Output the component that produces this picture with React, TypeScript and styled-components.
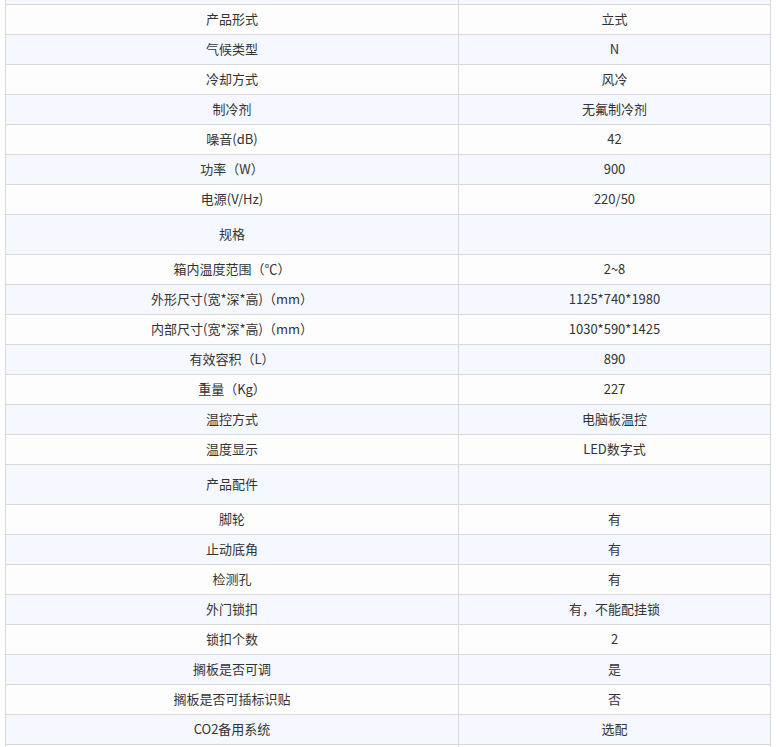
import React from "react";
import styled, { createGlobalStyle } from "styled-components";

const Global = createGlobalStyle`
  html, body { margin: 0; padding: 0; background: #ffffff; }
  body { font-family: "Noto Sans CJK SC", "Liberation Sans", sans-serif; overflow: hidden; }
`;

const Page = styled.div`
  padding-left: 5px;
  width: 766px;
`;

const Table = styled.table`
  width: 766px;
  margin-top: -26px;
  border-collapse: collapse;
  table-layout: fixed;
  font-size: 13px;
  color: #333333;
`;

const Row = styled.tr<{ $shaded: boolean; $tall?: boolean }>`
  background: ${(p) => (p.$shaded ? "#f5f9ff" : "#fdfdfd")};
  height: ${(p) => (p.$tall ? 40 : 30)}px;
`;

const Cell = styled.td<{ $w?: number }>`
  border: 1px solid #d9d9d9;
  padding: 0 0 2px 0;
  text-align: center;
  vertical-align: middle;
  line-height: 18px;
  ${(p) => (p.$w ? `width: ${p.$w}px;` : "")}
`;

const rows: [string, string, boolean?][] = [
  ["", ""],
  ["产品形式", "立式"],
  ["气候类型", "N"],
  ["冷却方式", "风冷"],
  ["制冷剂", "无氟制冷剂"],
  ["噪音(dB)", "42"],
  ["功率（W）", "900"],
  ["电源(V/Hz)", "220/50"],
  ["规格", "", true],
  ["箱内温度范围（℃）", "2~8"],
  ["外形尺寸(宽*深*高)（mm）", "1125*740*1980"],
  ["内部尺寸(宽*深*高)（mm）", "1030*590*1425"],
  ["有效容积（L）", "890"],
  ["重量（Kg）", "227"],
  ["温控方式", "电脑板温控"],
  ["温度显示", "LED数字式"],
  ["产品配件", "", true],
  ["脚轮", "有"],
  ["止动底角", "有"],
  ["检测孔", "有"],
  ["外门锁扣", "有，不能配挂锁"],
  ["锁扣个数", "2"],
  ["搁板是否可调", "是"],
  ["搁板是否可插标识贴", "否"],
  ["CO2备用系统", "选配"],
  ["", ""],
];

export default function App() {
  return (
    <>
      <Global />
      <Page>
        <Table>
          <tbody>
            {rows.map(([k, v, tall], i) => (
              <Row key={i} $shaded={i % 2 === 0} $tall={!!tall}>
                <Cell $w={452}>{k}</Cell>
                <Cell>{v}</Cell>
              </Row>
            ))}
          </tbody>
        </Table>
      </Page>
    </>
  );
}
